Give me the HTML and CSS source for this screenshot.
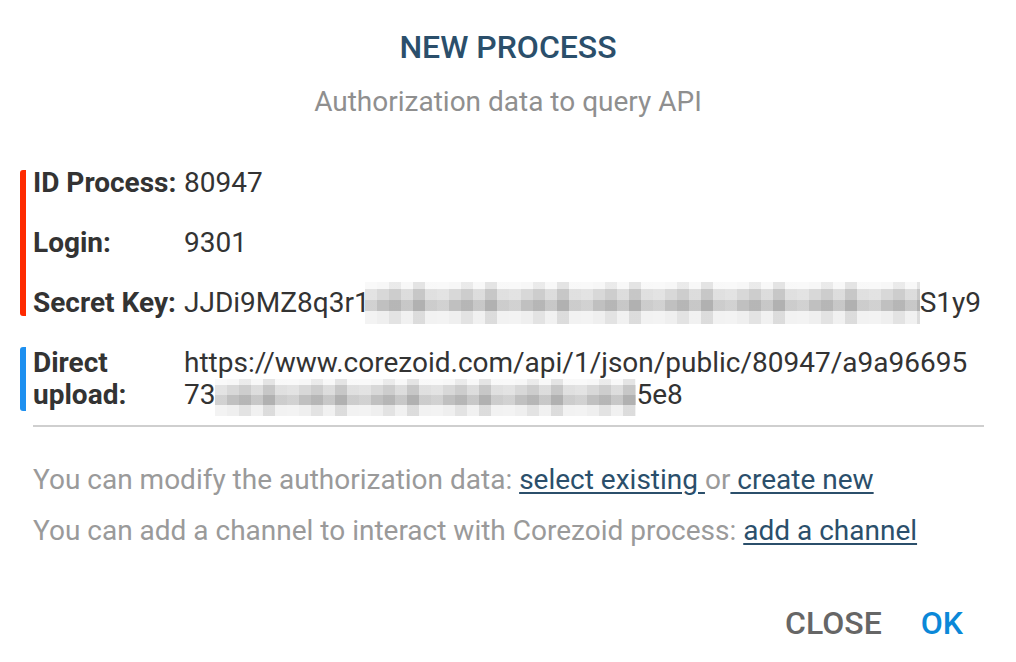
FILE: index.html
```html
<!DOCTYPE html>
<html>
<head>
<meta charset="utf-8">
<link rel="stylesheet" href="styles.css">
</head>
<body>
<div class="dialog">
  <h1 class="title">NEW PROCESS</h1>
  <p class="subtitle">Authorization data to query API</p>

  <div class="group group-red">
    <div class="row"><span class="label">ID Process:</span><span class="value">80947</span></div>
    <div class="row"><span class="label">Login:</span><span class="value">9301</span></div>
    <div class="row"><span class="label">Secret Key:</span><span class="value">JJDi9MZ8q3r1<span class="blur blur-key"></span>S1y9</span></div>
  </div>

  <div class="group group-blue">
    <div class="row row-tall"><span class="label">Direct<br>upload:</span><span class="value">https://www.corezoid.com/api/1/json/public/80947/a9a96695<br>73<span class="blur blur-url"></span>5e8</span></div>
  </div>

  <hr class="divider">

  <p class="info">You can modify the authorization data: <a class="link" href="#">select existing </a>or<a class="link" href="#"> create new</a></p>
  <p class="info">You can add a channel to interact with Corezoid process: <a class="link" href="#">add a channel</a></p>

  <div class="actions">
    <button class="btn btn-close">CLOSE</button>
    <button class="btn btn-ok">OK</button>
  </div>
</div>
</body>
</html>
```

FILE: styles.css
```css
html, body {
  margin: 0;
  padding: 0;
  background: #ffffff;
}

body {
  font-family: Roboto, "Liberation Sans", Arial, sans-serif;
  color: #333333;
}

.dialog {
  width: 1016px;
  height: 662px;
  box-sizing: border-box;
  padding: 0 32px 0 20px;
  display: flex;
  flex-direction: column;
}

.title {
  margin: 29px 0 0 12px;
  font-size: 32px;
  font-weight: 500;
  line-height: 36px;
  text-align: center;
  color: #2b4f6b;
}

.subtitle {
  margin: 21px 0 0 12px;
  font-size: 28px;
  line-height: 32px;
  text-align: center;
  color: #8f8f8f;
}

.group {
  border-left: 6px solid #ff2a00;
  border-radius: 3px;
  padding-left: 7px;
  display: flex;
  flex-direction: column;
  gap: 34px;
}

.group-red {
  margin-top: 52px;
}

.group-blue {
  margin-top: 31px;
  border-left-color: #1e90f0;
}

.row {
  display: grid;
  grid-template-columns: 151px 1fr;
  font-size: 28px;
  line-height: 26px;
}

.row-tall {
  line-height: 32px;
}

.label {
  font-weight: 700;
  color: #333333;
}

.value {
  color: #333333;
  white-space: nowrap;
}

.blur {
  display: inline-block;
  background:
    repeating-linear-gradient(90deg, rgba(255,255,255,0.28) 0 12px, rgba(0,0,0,0) 12px 24px, rgba(0,0,0,0.05) 24px 36px, rgba(255,255,255,0.12) 36px 48px, rgba(0,0,0,0.08) 48px 60px, rgba(255,255,255,0.2) 60px 72px),
    linear-gradient(to bottom, #f7f7f7 0 17%, #d8d8d8 17% 42%, #c0c0c0 42% 70%, #efefef 70% 100%);
}

.blur-key {
  width: 555px;
  height: 42px;
  margin: -8px 0 -9px -5px;
  vertical-align: -3px;
}

.blur-url {
  width: 421px;
  height: 37px;
  margin: 0 0 -6px 0;
  vertical-align: -6px;
}

.divider {
  margin: 14px 0 0 13px;
  border: 0;
  height: 2px;
  background: #cfcfcf;
}

.info {
  margin: 37px 0 0 13px;
  font-size: 28px;
  line-height: 32px;
  color: #9a9a9a;
}

.info + .info {
  margin-top: 19px;
}

.link {
  color: #2b4f6b;
  text-decoration: underline;
  text-underline-offset: 3px;
}

.actions {
  margin: auto 21px 21px 0;
  display: flex;
  justify-content: flex-end;
  gap: 39px;
}

.btn {
  border: 0;
  background: none;
  padding: 0;
  font-family: Roboto, "Liberation Sans", Arial, sans-serif;
  font-size: 32px;
  font-weight: 500;
  line-height: 36px;
}

.btn-close {
  color: #666666;
}

.btn-ok {
  color: #0b88d8;
}
```
